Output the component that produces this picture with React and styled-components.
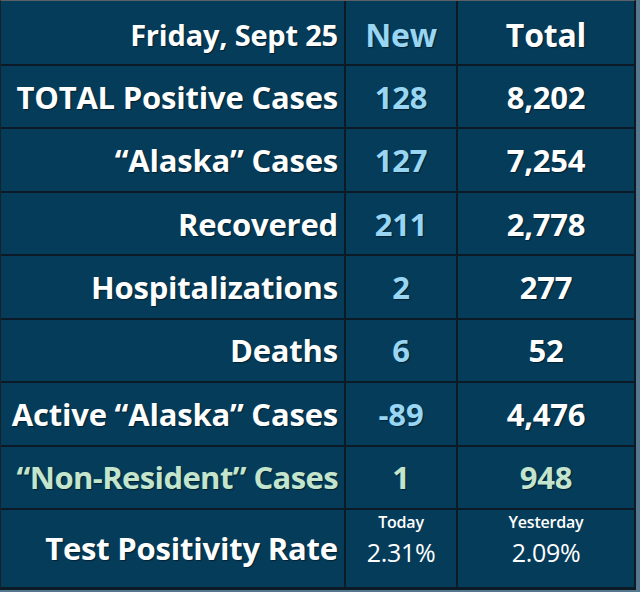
import React from 'react'
import styled, { createGlobalStyle } from 'styled-components'

const GlobalStyle = createGlobalStyle`
  html, body {
    margin: 0;
    padding: 0;
    background: #56788f;
  }
  body {
    width: 640px;
    height: 592px;
    overflow: hidden;
    font-family: "Open Sans", "Liberation Sans", sans-serif;
  }
`;

const Board = styled.div`
  box-sizing: border-box;
  width: 636px;
  height: 590px;
  display: grid;
  grid-template-columns: 343px 110px 1fr;
  grid-template-rows: 63px repeat(7, 1fr) 77px;
  gap: 2px;
  background: #0b1a24;
  border-top: 1px solid #5c6166;
  border-left: 1px solid #14222c;
  border-right: 2px solid #0b1a24;
  border-bottom: 3px solid #0b1a24;
`;

const Cell = styled.div`
  background: #053c5a;
  display: flex;
  align-items: center;
  justify-content: ${p => (p.label ? 'flex-end' : 'center')};
  padding-right: ${p => (p.label ? '6px' : '0')};
  padding-top: ${p => (p.head ? '3px' : '0')};
  font-weight: 700;
  font-size: ${p => p.size || 31}px;
  color: ${p => p.color || '#ffffff'};
  text-shadow: 1px 1px 1px rgba(0, 0, 0, 0.45);
  white-space: nowrap;
  letter-spacing: ${p => (p.tight ? '-0.6px' : '-0.2px')};
`;

const RateCell = styled.div`
  background: #053c5a;
  display: flex;
  flex-direction: column;
  align-items: center;
  padding-top: 2px;
  color: #ffffff;
`;

const RateCaption = styled.span`
  font-size: 16px;
  line-height: 20px;
  font-weight: 600;
  letter-spacing: -0.2px;
`;

const RateValue = styled.span`
  margin-top: 5px;
  font-size: 25px;
  line-height: 30px;
  font-weight: 400;
  letter-spacing: -0.3px;
`;

const BLUE = '#98d6f3';
const GREEN = '#c3e5cd';

const rows = [
  { label: 'TOTAL Positive Cases', fresh: '128', total: '8,202' },
  { label: '“Alaska” Cases', fresh: '127', total: '7,254' },
  { label: 'Recovered', fresh: '211', total: '2,778' },
  { label: 'Hospitalizations', fresh: '2', total: '277' },
  { label: 'Deaths', fresh: '6', total: '52' },
  { label: 'Active “Alaska” Cases', fresh: '-89', total: '4,476' },
  { label: '“Non-Resident” Cases', fresh: '1', total: '948', green: true },
];

export default function App() {
  return (
    <>
      <GlobalStyle />
      <Board>
        <Cell label head size={29}>Friday, Sept 25</Cell>
        <Cell head color={BLUE} size={32}>New</Cell>
        <Cell head size={32}>Total</Cell>

        {rows.map(row => (
          <React.Fragment key={row.label}>
            <Cell label tight={row.green} color={row.green ? GREEN : undefined}>{row.label}</Cell>
            <Cell color={row.green ? GREEN : BLUE}>{row.fresh}</Cell>
            <Cell color={row.green ? GREEN : undefined}>{row.total}</Cell>
          </React.Fragment>
        ))}

        <Cell label size={31}>Test Positivity Rate</Cell>
        <RateCell>
          <RateCaption>Today</RateCaption>
          <RateValue>2.31%</RateValue>
        </RateCell>
        <RateCell>
          <RateCaption>Yesterday</RateCaption>
          <RateValue>2.09%</RateValue>
        </RateCell>
      </Board>
    </>
  )
}
